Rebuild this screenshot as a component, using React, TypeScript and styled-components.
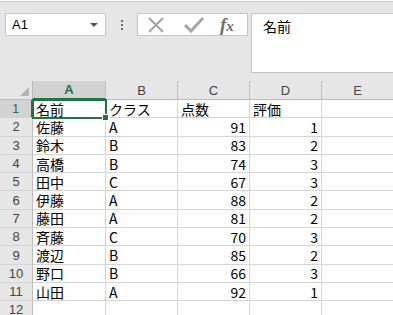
import styled, { createGlobalStyle } from 'styled-components';

const GlobalStyle = createGlobalStyle`
  html, body {
    margin: 0;
    padding: 0;
    background: #ffffff;
  }
  body {
    font-family: "Noto Sans CJK JP", "Liberation Sans", sans-serif;
  }
`;

const rows = [
  ['名前', 'クラス', '点数', '評価'],
  ['佐藤', 'A', '91', '1'],
  ['鈴木', 'B', '83', '2'],
  ['高橋', 'B', '74', '3'],
  ['田中', 'C', '67', '3'],
  ['伊藤', 'A', '88', '2'],
  ['藤田', 'A', '81', '2'],
  ['斉藤', 'C', '70', '3'],
  ['渡辺', 'B', '85', '2'],
  ['野口', 'B', '66', '3'],
  ['山田', 'A', '92', '1'],
  ['', '', '', ''],
];

const columns = ['A', 'B', 'C', 'D', 'E'];

const App = () => {
  return (
    <S_Page>
      <GlobalStyle />
      <S_Toolbar>
        <S_NameBox>
          <span>A1</span>
          <S_Caret />
        </S_NameBox>
        <S_Dots>
          <i />
          <i />
          <i />
        </S_Dots>
        <S_ButtonGroup>
          <S_IconSlot>
            <svg width="20" height="20" viewBox="0 0 20 20">
              <path d="M3 3 L17 17 M17 3 L3 17" stroke="#a6a6a6" strokeWidth="2.2" fill="none" />
            </svg>
          </S_IconSlot>
          <S_IconSlot>
            <svg width="22" height="20" viewBox="0 0 22 20">
              <path d="M2 10 L8 16 L20 3" stroke="#a6a6a6" strokeWidth="3" fill="none" />
            </svg>
          </S_IconSlot>
          <S_Fx>
            <i>f</i>
            <i>x</i>
          </S_Fx>
        </S_ButtonGroup>
        <S_FormulaInput>名前</S_FormulaInput>
      </S_Toolbar>

      <S_Grid>
        <S_Corner>
          <S_CornerTriangle />
        </S_Corner>
        {columns.map(col => (
          <S_ColHeader key={col} active={col === 'A'}>
            {col}
          </S_ColHeader>
        ))}
        {rows.map((row, i) => (
          <S_RowFragment key={i}>
            <S_RowHeader active={i === 0}>{i + 1}</S_RowHeader>
            {row.map((value, j) => (
              <S_Cell key={j} numeric={j >= 2 && i > 0} selected={i === 0 && j === 0}>
                {value}
                {i === 0 && j === 0 && <S_FillHandle />}
              </S_Cell>
            ))}
            <S_Cell />
          </S_RowFragment>
        ))}
      </S_Grid>
    </S_Page>
  );
};
export default App;

const S_Page = styled.div`
  width: 393px;
  height: 315px;
  overflow: hidden;
  display: flex;
  flex-direction: column;
  background: #ffffff;
`;

const S_Toolbar = styled.div`
  height: 80px;
  flex-shrink: 0;
  box-sizing: border-box;
  background: #e6e6e6;
  border-top: 1px solid #c6c6c6;
  margin-top: 1px;
  display: flex;
  align-items: flex-start;
  padding: 11px 0 0 5px;
`;

const S_NameBox = styled.div`
  width: 101px;
  height: 23px;
  box-sizing: border-box;
  background: #ffffff;
  border: 1px solid #c6c6c6;
  display: flex;
  align-items: center;
  justify-content: space-between;
  padding: 0 7px 0 6px;
  font-family: "Liberation Sans", sans-serif;
  font-size: 13px;
  color: #000;
`;

const S_Caret = styled.span`
  width: 0;
  height: 0;
  border-left: 4px solid transparent;
  border-right: 4px solid transparent;
  border-top: 4px solid #555;
`;

const S_Dots = styled.div`
  width: 31px;
  height: 23px;
  display: flex;
  flex-direction: column;
  align-items: center;
  justify-content: center;
  gap: 2px;
  & > i {
    width: 2px;
    height: 2px;
    background: #6b6b6b;
  }
`;

const S_ButtonGroup = styled.div`
  width: 111px;
  height: 23px;
  box-sizing: border-box;
  background: #ffffff;
  border: 1px solid #c6c6c6;
  display: flex;
  align-items: center;
  padding-left: 8px;
`;

const S_IconSlot = styled.div`
  width: 37px;
  height: 21px;
  display: flex;
  align-items: center;
  justify-content: flex-start;
`;

const S_Fx = styled.div`
  display: flex;
  align-items: baseline;
  font-family: "Liberation Serif", serif;
  font-style: italic;
  font-weight: bold;
  color: #6d6d6d;
  & > i:first-child {
    font-size: 19px;
  }
  & > i:last-child {
    font-size: 15px;
  }
`;

const S_FormulaInput = styled.div`
  flex: 1;
  height: 60px;
  box-sizing: border-box;
  margin-left: 3px;
  background: #ffffff;
  border: 1px solid #c6c6c6;
  border-right: none;
  padding: 2px 0 0 11px;
  font-size: 14px;
  color: #000;
`;

const S_Grid = styled.div`
  display: grid;
  grid-template-columns: 33px 73px 72px 72px 72px 72px;
  grid-template-rows: 19px;
  grid-auto-rows: 18.3px;
  font-size: 14px;
`;

const S_RowFragment = styled.div`
  display: contents;
`;

const S_Corner = styled.div`
  background: #e6e6e6;
  border-right: 1px solid #bdbdbd;
  border-bottom: 1px solid #bdbdbd;
  position: relative;
`;

const S_CornerTriangle = styled.span`
  position: absolute;
  right: 3px;
  bottom: 3px;
  width: 0;
  height: 0;
  border-left: 9px solid transparent;
  border-bottom: 9px solid #b4b4b4;
`;

const S_ColHeader = styled.div<{ active?: boolean }>`
  background: ${p => (p.active ? '#d2d2d2' : '#e6e6e6')};
  color: ${p => (p.active ? '#217346' : '#444444')};
  font-family: "Liberation Sans", sans-serif;
  font-size: 13px;
  font-weight: ${p => (p.active ? 'bold' : 'normal')};
  display: flex;
  align-items: center;
  justify-content: center;
  border-right: 1px solid #bdbdbd;
  border-bottom: ${p => (p.active ? '2px solid #217346' : '1px solid #bdbdbd')};
  box-sizing: border-box;
`;

const S_RowHeader = styled.div<{ active?: boolean }>`
  background: ${p => (p.active ? '#d2d2d2' : '#e6e6e6')};
  color: ${p => (p.active ? '#217346' : '#444444')};
  font-family: "Liberation Sans", sans-serif;
  font-size: 13px;
  display: flex;
  align-items: center;
  justify-content: center;
  border-right: ${p => (p.active ? '2px solid #217346' : '1px solid #bdbdbd')};
  border-bottom: 1px solid #d4d4d4;
  box-sizing: border-box;
`;

const S_Cell = styled.div<{ numeric?: boolean; selected?: boolean }>`
  position: relative;
  box-sizing: border-box;
  border-right: 1px solid #d4d4d4;
  border-bottom: 1px solid #d4d4d4;
  display: flex;
  align-items: center;
  justify-content: ${p => (p.numeric ? 'flex-end' : 'flex-start')};
  padding: 0 3px;
  color: #000;
  white-space: nowrap;
  ${p =>
    p.selected &&
    `
    outline: 2px solid #217346;
    outline-offset: -1px;
    z-index: 1;
  `}
`;

const S_FillHandle = styled.span`
  position: absolute;
  right: -4px;
  bottom: -4px;
  width: 5px;
  height: 5px;
  background: #217346;
  border: 1px solid #ffffff;
`;
